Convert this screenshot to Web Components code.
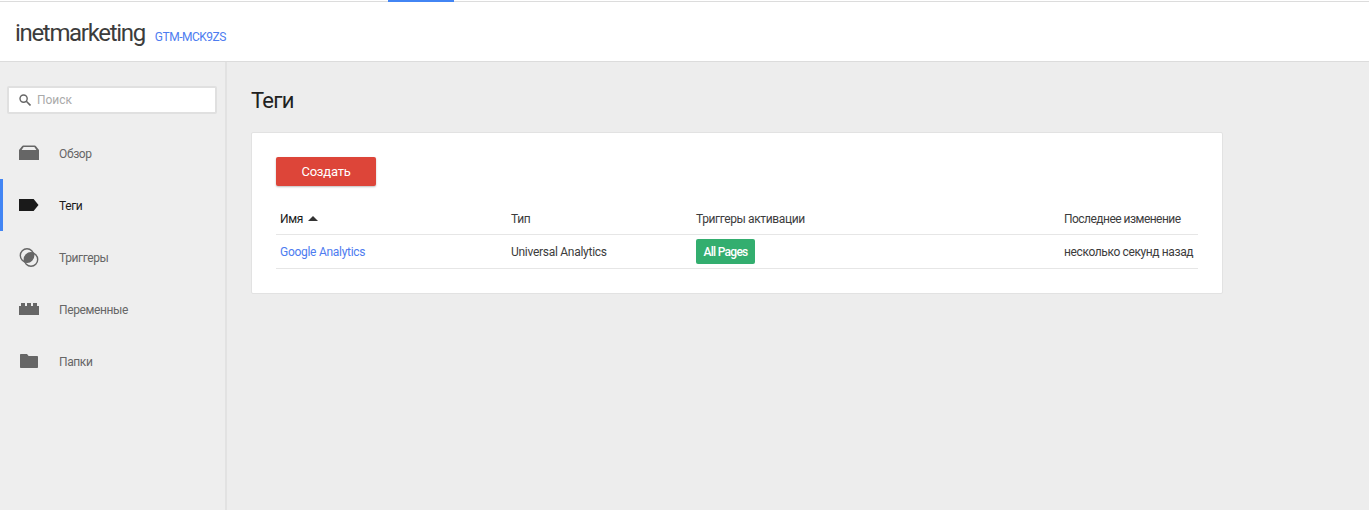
<!DOCTYPE html>
<html>
<head>
<meta charset="utf-8">
<style>
  html, body { margin: 0; height: 100%; }
  body { font-family: Roboto, "Liberation Sans", sans-serif; font-size: 12px; letter-spacing: -.38px; color: #333; background: #ededed; overflow: hidden; }
</style>
</head>
<body>
<gtm-app>
  <gtm-header slot="header" name="inetmarketing" container="GTM-MCK9ZS"></gtm-header>
  <gtm-sidebar slot="sidebar">
    <gtm-nav-item label="Обзор" icon="overview"></gtm-nav-item>
    <gtm-nav-item label="Теги" icon="tag" active></gtm-nav-item>
    <gtm-nav-item label="Триггеры" icon="trigger"></gtm-nav-item>
    <gtm-nav-item label="Переменные" icon="brick"></gtm-nav-item>
    <gtm-nav-item label="Папки" icon="folder"></gtm-nav-item>
  </gtm-sidebar>
  <gtm-tags-page></gtm-tags-page>
</gtm-app>

<script>
class GtmApp extends HTMLElement {
    connectedCallback() {
        this.attachShadow({ mode: 'open' });
        this.shadowRoot.innerHTML = `
            <style>
                :host { display: flex; flex-direction: column; height: 510px; }
                .top { height: 2px; flex: none; background: linear-gradient(#fff 1px, #dcdcdc 1px); padding-left: 388px; }
                .top i { display: block; width: 66px; height: 2px; background: #4285f4; }
                .body { flex: 1; display: flex; min-height: 0; }
            </style>
            <div class="top"><i></i></div>
            <slot name="header"></slot>
            <div class="body">
                <slot name="sidebar"></slot>
                <slot></slot>
            </div>
        `;
    }
}

class GtmHeader extends HTMLElement {
    connectedCallback() {
        this.attachShadow({ mode: 'open' });
        this.shadowRoot.innerHTML = `
            <style>
                :host { display: flex; flex: none; align-items: baseline; box-sizing: border-box; height: 60px; padding: 17px 0 0 15px; background: #fff; border-bottom: 1px solid #dcdcdc; }
                .name { font-size: 24px; line-height: 28px; color: #3c3c3c; letter-spacing: -1.32px; }
                .id { margin-left: 10px; font-size: 12px; color: #4d7cf0; letter-spacing: -.5px; }
            </style>
            <span class="name">${this.getAttribute('name')}</span>
            <span class="id">${this.getAttribute('container')}</span>
        `;
    }
}

class GtmSidebar extends HTMLElement {
    connectedCallback() {
        this.attachShadow({ mode: 'open' });
        this.shadowRoot.innerHTML = `
            <style>
                :host { display: block; flex: none; width: 225px; border-right: 2px solid #e2e2e2; background: #eeeeee; }
                .search { display: flex; align-items: center; box-sizing: border-box; height: 28px; margin: 24px 8px 13px 7px; padding-left: 10px; background: #fff; border: 2px solid #e0e0e0; border-radius: 2px; color: #aaa; letter-spacing: -.05px; }
                .search svg { margin-right: 6px; }
            </style>
            <div class="search">
                <svg width="12" height="12" viewBox="0 0 12 12" fill="none" stroke="#666" stroke-width="1.4"><circle cx="4.6" cy="4.6" r="3.6"/><path d="M7.3 7.3l4.2 4.2" stroke-width="1.6"/></svg>
                <span>Поиск</span>
            </div>
            <slot></slot>
        `;
    }
}

const NAV_ICONS = {
    overview: '<path d="M0 7 3 3.2C3.3 2.8 3.8 2.6 4.3 2.6h11.4c.5 0 1 .2 1.3.6L20 7v10H0z" fill="#666"/><path d="M2.6 7 4.6 4h10.8l2 3z" fill="#eee"/>',
    tag: '<path d="M0 4h14.6L19.5 10l-4.9 6H0z" fill="#1a1a1a"/>',
    trigger: '<circle cx="8" cy="8.5" r="6.7" fill="none" stroke="#666" stroke-width="1.4"/><circle cx="12" cy="12.5" r="6.7" fill="none" stroke="#666" stroke-width="1.4"/><path d="M14.29 6.21A6.7 6.7 0 0 1 5.71 14.79 6.7 6.7 0 0 1 14.29 6.21z" fill="#666"/>',
    brick: '<path d="M0 7h2V4h4v3h2V4h4v3h2V4h4v3h2v9H0z" fill="#666"/>',
    folder: '<path d="M1 4c0-.6.4-1 1-1h6l1.6 2H18c.6 0 1 .4 1 1v10c0 .6-.4 1-1 1H2c-.6 0-1-.4-1-1z" fill="#666"/>'
};

class GtmNavItem extends HTMLElement {
    connectedCallback() {
        this.attachShadow({ mode: 'open' });
        const active = this.hasAttribute('active');
        this.shadowRoot.innerHTML = `
            <style>
                :host { display: flex; align-items: center; height: 52px; box-sizing: border-box; padding-left: 16px; color: ${active ? '#1a1a1a' : '#666'}; border-left: 3px solid ${active ? '#4285f4' : 'transparent'}; }
                svg { flex: none; margin-right: 20px; }
                span { padding-top: 2px; }
            </style>
            <svg width="20" height="20" viewBox="0 0 20 20">${NAV_ICONS[this.getAttribute('icon')]}</svg>
            <span>${this.getAttribute('label')}</span>
        `;
    }
}

class GtmButton extends HTMLElement {
    connectedCallback() {
        this.attachShadow({ mode: 'open' });
        this.shadowRoot.innerHTML = `
            <style>
                :host { display: flex; align-items: center; justify-content: center; width: 100px; height: 29px; background: #dd4539; color: #fff; font-size: 13px; letter-spacing: -.2px; border-radius: 2px; box-shadow: 0 1px 2px rgba(0,0,0,.25); }
            </style>
            <slot></slot>
        `;
    }
}

class GtmChip extends HTMLElement {
    connectedCallback() {
        this.attachShadow({ mode: 'open' });
        this.shadowRoot.innerHTML = `
            <style>
                :host { display: inline-flex; align-items: center; justify-content: center; box-sizing: border-box; width: 59px; height: 25px; background: #33ae6f; color: #fff; font-weight: 500; letter-spacing: -.7px; border-radius: 2px; }
            </style>
            <slot></slot>
        `;
    }
}

class GtmRow extends HTMLElement {
    connectedCallback() {
        this.attachShadow({ mode: 'open' });
        this.shadowRoot.innerHTML = `
            <style>
                :host { display: grid; grid-template-columns: 231px 185px 368px 138px; align-items: center; border-bottom: 1px solid #e6e6e6; color: #3c3c3c; }
                ::slotted(*) { padding-left: 4px; white-space: nowrap; }
            </style>
            <slot></slot>
        `;
    }
}

class GtmTagsPage extends HTMLElement {
    connectedCallback() {
        this.attachShadow({ mode: 'open' });
        this.shadowRoot.innerHTML = `
            <style>
                :host { display: block; flex: 1; padding: 0 0 0 24px; }
                h1 { margin: 0; padding-top: 24px; height: 46px; font-size: 22px; line-height: 30px; font-weight: 400; color: #212121; letter-spacing: -.7px; }
                .card { box-sizing: border-box; width: 972px; height: 162px; padding: 24px 24px 0; background: #fff; border: 1px solid #e2e2e2; border-radius: 2px; }
                .head { height: 31px; margin-top: 17px; }
                .head .changed { letter-spacing: -.53px; }
                .row { height: 33px; letter-spacing: -.28px; }
                .row .last { letter-spacing: -.38px; }
                .sort { color: #1a1a1a; display: flex; align-items: center; }
                .sort i { width: 0; height: 0; margin-left: 5px; border: 5px solid transparent; border-top: 0; border-bottom-color: #333; }
                a { color: #4d7cf0; text-decoration: none; }
            </style>
            <h1>Теги</h1>
            <div class="card">
                <gtm-button>Создать</gtm-button>
                <gtm-row class="head">
                    <div class="sort">Имя<i></i></div>
                    <div>Тип</div>
                    <div>Триггеры активации</div>
                    <div class="changed">Последнее изменение</div>
                </gtm-row>
                <gtm-row class="row">
                    <div><a href="#">Google Analytics</a></div>
                    <div>Universal Analytics</div>
                    <div><gtm-chip>All Pages</gtm-chip></div>
                    <div class="last">несколько секунд назад</div>
                </gtm-row>
            </div>
        `;
    }
}

customElements.define('gtm-app', GtmApp);
customElements.define('gtm-header', GtmHeader);
customElements.define('gtm-sidebar', GtmSidebar);
customElements.define('gtm-nav-item', GtmNavItem);
customElements.define('gtm-button', GtmButton);
customElements.define('gtm-chip', GtmChip);
customElements.define('gtm-row', GtmRow);
customElements.define('gtm-tags-page', GtmTagsPage);
</script>
</body>
</html>
